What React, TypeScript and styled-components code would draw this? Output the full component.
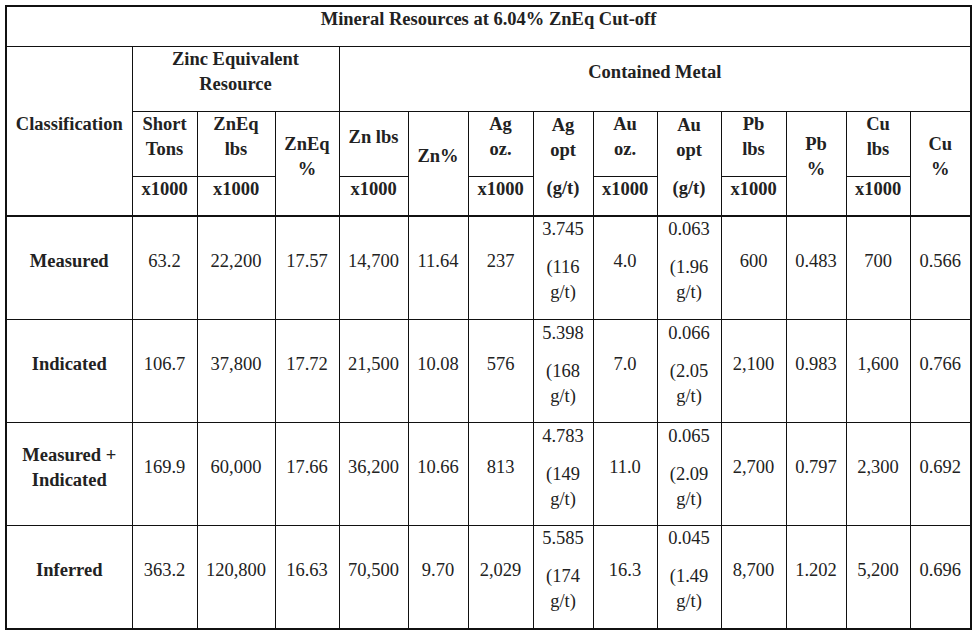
import React from 'react';
import styled, { createGlobalStyle } from 'styled-components';

const GlobalStyle = createGlobalStyle`
  body {
    margin: 0;
    padding: 5px;
    background: #fff;
    font-family: "Liberation Serif", "Times New Roman", serif;
    color: #222;
  }
`;

const Table = styled.table`
  border-collapse: collapse;
  table-layout: fixed;
  width: 967px;
  border: 2px solid #111;
  font-size: 18.5px;
  line-height: 25px;
  text-align: center;
`;

const Row = styled.tr<{ $h: number }>`
  height: ${({ $h }) => $h}px;
`;

const Head = styled.th`
  border: 1px solid #111;
  padding: 0 3px;
  font-weight: bold;
  vertical-align: middle;
`;

const Cell = styled.td<{ $bold?: boolean }>`
  border: 1px solid #111;
  padding: 0 3px;
  vertical-align: middle;
  font-weight: ${({ $bold }) => ($bold ? 'bold' : 'normal')};
`;

const Body = styled.tbody`
  & tr:first-child td {
    border-top: 2px solid #111;
  }
`;

const Para = styled.p`
  margin: 0 0 13px;
`;

const colWidths = [126, 65, 78, 64, 69, 60, 65, 60, 64, 64, 65, 60, 64, 61];

type Grade = [string, string, string];

interface DataRow {
  label: React.ReactNode;
  tons: string;
  znEqLbs: string;
  znEqPct: string;
  znLbs: string;
  znPct: string;
  agOz: string;
  agOpt: Grade;
  auOz: string;
  auOpt: Grade;
  pbLbs: string;
  pbPct: string;
  cuLbs: string;
  cuPct: string;
}

const rows: DataRow[] = [
  {
    label: 'Measured',
    tons: '63.2', znEqLbs: '22,200', znEqPct: '17.57', znLbs: '14,700', znPct: '11.64',
    agOz: '237', agOpt: ['3.745', '(116', 'g/t)'], auOz: '4.0', auOpt: ['0.063', '(1.96', 'g/t)'],
    pbLbs: '600', pbPct: '0.483', cuLbs: '700', cuPct: '0.566',
  },
  {
    label: 'Indicated',
    tons: '106.7', znEqLbs: '37,800', znEqPct: '17.72', znLbs: '21,500', znPct: '10.08',
    agOz: '576', agOpt: ['5.398', '(168', 'g/t)'], auOz: '7.0', auOpt: ['0.066', '(2.05', 'g/t)'],
    pbLbs: '2,100', pbPct: '0.983', cuLbs: '1,600', cuPct: '0.766',
  },
  {
    label: <>Measured +<br />Indicated</>,
    tons: '169.9', znEqLbs: '60,000', znEqPct: '17.66', znLbs: '36,200', znPct: '10.66',
    agOz: '813', agOpt: ['4.783', '(149', 'g/t)'], auOz: '11.0', auOpt: ['0.065', '(2.09', 'g/t)'],
    pbLbs: '2,700', pbPct: '0.797', cuLbs: '2,300', cuPct: '0.692',
  },
  {
    label: 'Inferred',
    tons: '363.2', znEqLbs: '120,800', znEqPct: '16.63', znLbs: '70,500', znPct: '9.70',
    agOz: '2,029', agOpt: ['5.585', '(174', 'g/t)'], auOz: '16.3', auOpt: ['0.045', '(1.49', 'g/t)'],
    pbLbs: '8,700', pbPct: '1.202', cuLbs: '5,200', cuPct: '0.696',
  },
];

const Value = ({ children, bold }: { children: React.ReactNode; bold?: boolean }) => (
  <Cell $bold={bold}>
    <Para>{children}</Para>
  </Cell>
);

const GradeCell = ({ grade }: { grade: Grade }) => (
  <Cell>
    <Para>{grade[0]}</Para>
    <Para>
      {grade[1]}
      <br />
      {grade[2]}
    </Para>
  </Cell>
);

const App = () => (
  <>
    <GlobalStyle />
    <Table>
      <colgroup>
        {colWidths.map((w, i) => (
          <col key={i} style={{ width: w }} />
        ))}
      </colgroup>
      <thead>
        <Row $h={40}>
          <Head colSpan={14}>
            <Para>Mineral Resources at 6.04% ZnEq Cut-off</Para>
          </Head>
        </Row>
        <Row $h={65}>
          <Head rowSpan={3}>
            <Para>Classification</Para>
          </Head>
          <Head colSpan={3}>
            <Para>
              Zinc Equivalent
              <br />
              Resource
            </Para>
          </Head>
          <Head colSpan={10}>
            <Para>Contained Metal</Para>
          </Head>
        </Row>
        <Row $h={65}>
          <Head><Para>Short<br />Tons</Para></Head>
          <Head><Para>ZnEq<br />lbs</Para></Head>
          <Head rowSpan={2}><Para>ZnEq<br />%</Para></Head>
          <Head><Para>Zn lbs</Para></Head>
          <Head rowSpan={2}><Para>Zn%</Para></Head>
          <Head><Para>Ag<br />oz.</Para></Head>
          <Head rowSpan={2}><Para>Ag<br />opt</Para><Para>(g/t)</Para></Head>
          <Head><Para>Au<br />oz.</Para></Head>
          <Head rowSpan={2}><Para>Au<br />opt</Para><Para>(g/t)</Para></Head>
          <Head><Para>Pb<br />lbs</Para></Head>
          <Head rowSpan={2}><Para>Pb<br />%</Para></Head>
          <Head><Para>Cu<br />lbs</Para></Head>
          <Head rowSpan={2}><Para>Cu<br />%</Para></Head>
        </Row>
        <Row $h={39}>
          <Head><Para>x1000</Para></Head>
          <Head><Para>x1000</Para></Head>
          <Head><Para>x1000</Para></Head>
          <Head><Para>x1000</Para></Head>
          <Head><Para>x1000</Para></Head>
          <Head><Para>x1000</Para></Head>
          <Head><Para>x1000</Para></Head>
        </Row>
      </thead>
      <Body>
        {rows.map((r, i) => (
          <Row $h={i === 0 ? 104 : 103} key={i}>
            <Value bold>{r.label}</Value>
            <Value>{r.tons}</Value>
            <Value>{r.znEqLbs}</Value>
            <Value>{r.znEqPct}</Value>
            <Value>{r.znLbs}</Value>
            <Value>{r.znPct}</Value>
            <Value>{r.agOz}</Value>
            <GradeCell grade={r.agOpt} />
            <Value>{r.auOz}</Value>
            <GradeCell grade={r.auOpt} />
            <Value>{r.pbLbs}</Value>
            <Value>{r.pbPct}</Value>
            <Value>{r.cuLbs}</Value>
            <Value>{r.cuPct}</Value>
          </Row>
        ))}
      </Body>
    </Table>
  </>
);

export default App;
